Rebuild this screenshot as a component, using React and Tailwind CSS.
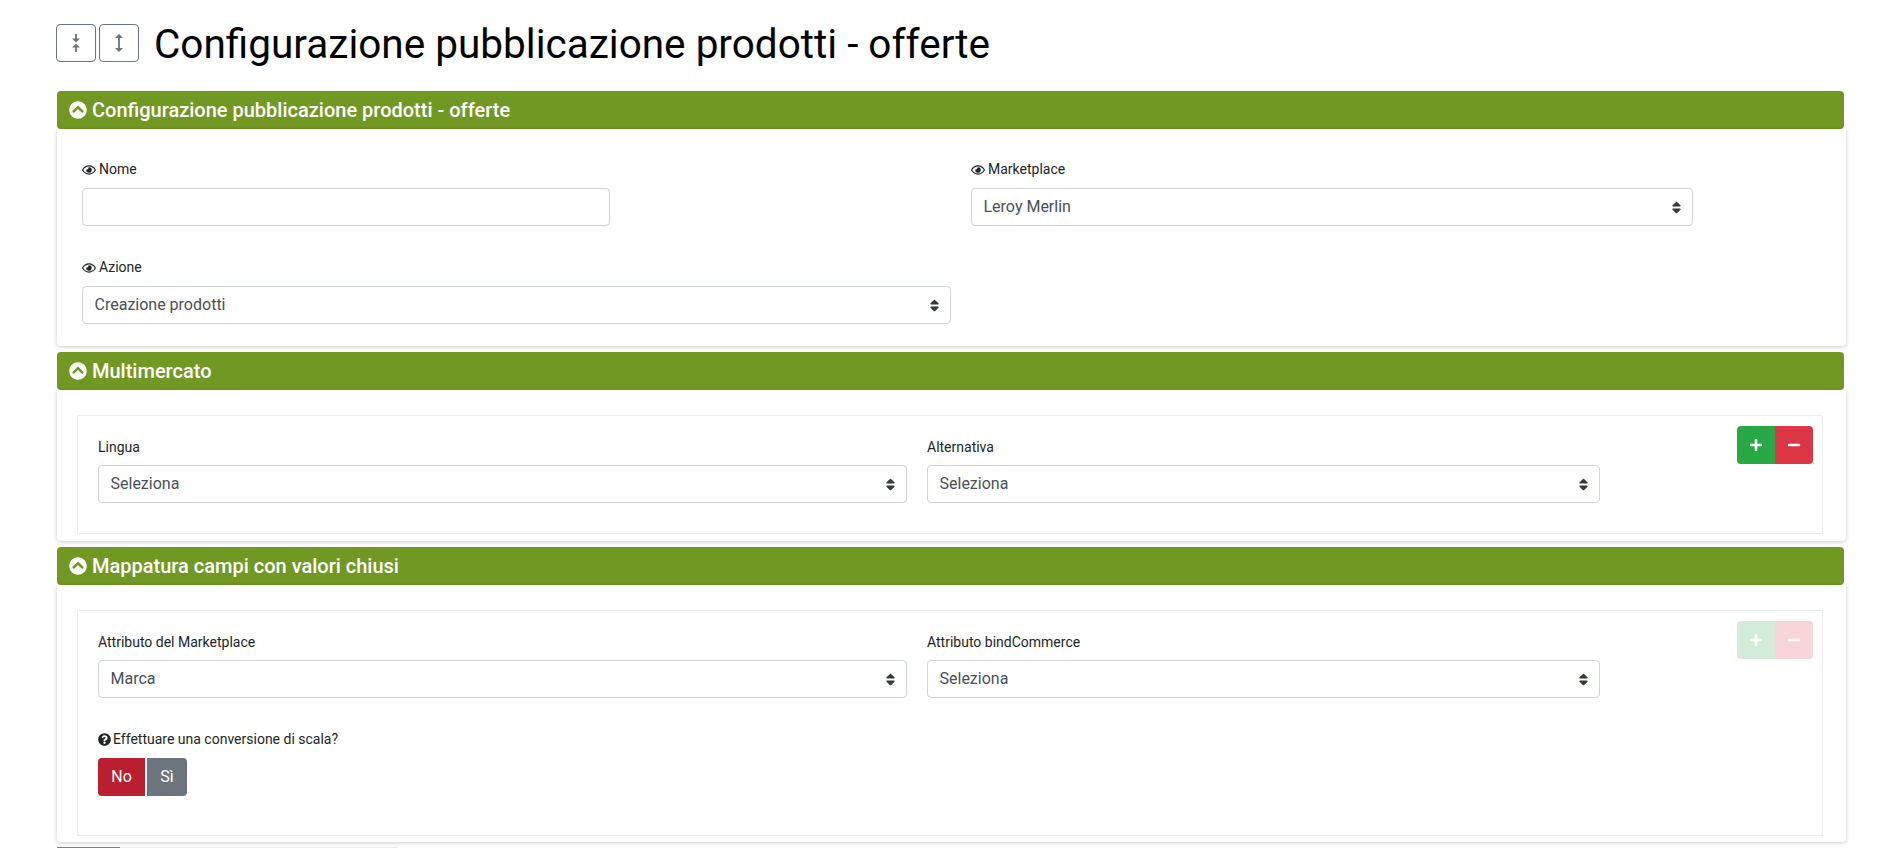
import { FaChevronCircleUp, FaMinus, FaPlus, FaQuestionCircle, FaRegEye, FaSort } from 'react-icons/fa'

const font = { fontFamily: 'Roboto, sans-serif' }

function Field({ label, icon, children, className = '', tight }) {
  return (
    <div className={className}>
      <label className="flex h-[21px] items-center gap-[3px] text-[14px] leading-[19px] text-[#212529]">
        {icon}
        {label}
      </label>
      <div className={tight ? 'mt-[7px]' : 'mt-[8px]'}>{children}</div>
    </div>
  )
}

function Select({ value }) {
  return (
    <div className="flex h-[38px] items-center justify-between rounded-[4px] border border-[#ced4da] bg-white pl-[11.5px] pr-[8px] text-[16px] text-[#495057]">
      <span>{value}</span>
      <FaSort className="text-[15px] text-[#343a40]" />
    </div>
  )
}

function Section({ title, children, bodyClass }) {
  return (
    <section>
      <div className="mr-[2px] flex h-[38px] items-center gap-[5px] rounded-[4px] bg-[#729824] pl-[12px] text-[20px] font-medium text-white">
        <FaChevronCircleUp className="text-[18px]" />
        {title}
      </div>
      <div className={`rounded-b-[4px] bg-white shadow-[0_1px_4px_rgba(0,0,0,0.2)] ${bodyClass}`}>{children}</div>
    </section>
  )
}

function PlusMinus({ faded }) {
  return (
    <div className={`absolute right-[9px] top-[10px] flex h-[38px] w-[76px] overflow-hidden rounded-[4px] text-white ${faded ? 'opacity-20' : ''}`}>
      <div className="flex w-[38px] items-center justify-center bg-[#28a745]"><FaPlus className="text-[14px]" /></div>
      <div className="flex w-[38px] items-center justify-center bg-[#dc3545]"><FaMinus className="text-[14px]" /></div>
    </div>
  )
}

const eye = <FaRegEye className="text-[14px]" />

export default function App() {
  return (
    <div className="h-[848px] overflow-hidden bg-white pl-[57px] pr-[53px]" style={font}>
      <div className="flex h-[91px] items-start pt-[24px]">
        <div className="-ml-px flex gap-[3px]">
          <button className="flex h-[38px] w-[40px] items-center justify-center rounded-[4px] border border-[#6c757d] text-[#6c757d]">
            <svg width="8" height="18" viewBox="0 0 8 18" fill="currentColor">
              <path d="M3.100 0h1.800v4.500H8L4 8.500 0 4.500h3.100zM4 9.500l4 4H4.900V18H3.100v-4.500H0z" />
            </svg>
          </button>
          <button className="flex h-[38px] w-[40px] items-center justify-center rounded-[4px] border border-[#6c757d] text-[#6c757d]">
            <svg width="8" height="18" viewBox="0 0 8 18" fill="currentColor">
              <path d="M4 0l4 4H4.900v10H8l-4 4-4-4h3.100V4H0z" />
            </svg>
          </button>
        </div>
        <h1 className="ml-[15px] text-[40.5px] font-normal leading-[40px] text-black">Configurazione pubblicazione prodotti - offerte</h1>
      </div>

      <Section title="Configurazione pubblicazione prodotti - offerte" bodyClass="h-[217px] px-[25px] pt-[30px]">
        <div className="flex">
          <Field label="Nome" icon={eye} className="w-[528px]">
            <div className="h-[38px] rounded-[4px] border border-[#ced4da] bg-white" />
          </Field>
          <Field label="Marketplace" icon={eye} className="ml-[361px] w-[722px]">
            <Select value="Leroy Merlin" />
          </Field>
        </div>
        <Field label="Azione" icon={eye} className="mt-[31px] w-[869px]">
          <Select value="Creazione prodotti" />
        </Field>
      </Section>

      <div className="mt-[6px]">
        <Section title="Multimercato" bodyClass="h-[151px] pl-[20px] pr-[23px] pt-[25px]">
          <div className="relative h-[119px] border border-[#eeeeee] pl-[20px] pt-[21px]">
            <div className="flex gap-[20px]">
              <Field tight label="Lingua" className="w-[809px]"><Select value="Seleziona" /></Field>
              <Field tight label="Alternativa" className="w-[673px]"><Select value="Seleziona" /></Field>
            </div>
            <PlusMinus />
          </div>
        </Section>
      </div>

      <div className="mt-[6px]">
        <Section title="Mappatura campi con valori chiusi" bodyClass="h-[257px] pl-[20px] pr-[23px] pt-[25px]">
          <div className="relative h-[226px] border border-[#eeeeee] pl-[20px] pt-[21px]">
            <div className="flex gap-[20px]">
              <Field tight label="Attributo del Marketplace" className="w-[809px]"><Select value="Marca" /></Field>
              <Field tight label="Attributo bindCommerce" className="w-[673px]"><Select value="Seleziona" /></Field>
            </div>
            <div className="mt-[32px]">
              <label className="flex h-[19px] items-center gap-[2px] text-[14px] text-[#212529]">
                <FaQuestionCircle className="text-[13px]" />
                Effettuare una conversione di scala?
              </label>
              <div className="mt-[9px] flex gap-[2px] text-[16px] text-white">
                <div className="flex h-[38px] w-[47px] items-center justify-center rounded-l-[4px] bg-[#b91f2f]">No</div>
                <div className="flex h-[38px] w-[40px] items-center justify-center rounded-r-[4px] bg-[#6c757d]">Sì</div>
              </div>
            </div>
            <PlusMinus faded />
          </div>
        </Section>
      </div>

      <div className="mt-[5px] flex h-[4px]">
        <div className="w-[63px] bg-[#729824]" />
        <div className="w-[278px] bg-[#eeeeee]" />
      </div>
    </div>
  )
}
